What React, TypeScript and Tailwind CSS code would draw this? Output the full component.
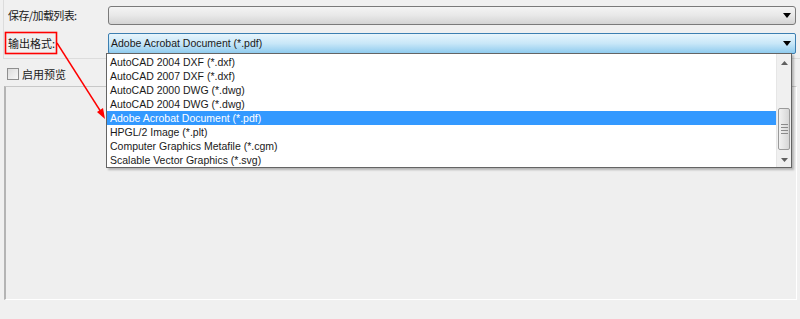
import type { FC } from "react";

const formats = [
  "AutoCAD 2004 DXF (*.dxf)",
  "AutoCAD 2007 DXF (*.dxf)",
  "AutoCAD 2000 DWG (*.dwg)",
  "AutoCAD 2004 DWG (*.dwg)",
  "Adobe Acrobat Document (*.pdf)",
  "HPGL/2 Image (*.plt)",
  "Computer Graphics Metafile (*.cgm)",
  "Scalable Vector Graphics (*.svg)",
];

const selected = 4;

const Caret: FC = () => (
  <svg width="8" height="5" viewBox="0 0 8 5" className="shrink-0">
    <path d="M0 0h8L4 5z" fill="#000" />
  </svg>
);

const ScrollArrow: FC<{ up?: boolean }> = ({ up }) => (
  <svg width="7" height="4" viewBox="0 0 7 4">
    <path d={up ? "M0 4h7L3.5 0z" : "M0 0h7L3.5 4z"} fill="#606060" />
  </svg>
);

const FormatList: FC = () => (
  <div className="absolute left-[106px] top-[53px] w-[686px] h-[115px] bg-white border border-[#646464] shadow-[2px_2px_2px_rgba(0,0,0,0.25)] flex text-[10.5px]">
    <div className="flex-1 pt-[1px]">
      {formats.map((f, i) => (
        <div
          key={f}
          className={
            i === selected
              ? "h-[14px] leading-[14px] pl-[3px] bg-[#3399ff] text-white"
              : "h-[14px] leading-[14px] pl-[3px] text-[#1a1a1a]"
          }
        >
          {f}
        </div>
      ))}
    </div>
    <div className="w-[15px] bg-[#f0f0f0] border-l border-[#e6e6e6] flex flex-col">
      <div className="h-[17px] flex items-center justify-center">
        <ScrollArrow up />
      </div>
      <div className="mt-[37px] h-[42px] mx-[1px] rounded-[2px] border border-[#9a9a9a] bg-gradient-to-r from-[#f2f2f2] to-[#d6d6d6] flex flex-col items-center justify-center gap-[2px]">
        <div className="w-[7px] h-px bg-[#8a8a8a]" />
        <div className="w-[7px] h-px bg-[#8a8a8a]" />
        <div className="w-[7px] h-px bg-[#8a8a8a]" />
        <div className="w-[7px] h-px bg-[#8a8a8a]" />
      </div>
      <div className="flex-1 flex items-end justify-center pb-[5px]">
        <ScrollArrow />
      </div>
    </div>
  </div>
);

export default function App() {
  return (
    <div className="relative w-[800px] h-[319px] overflow-hidden bg-[#f0f0f0] text-[11px] text-[#1a1a1a] font-['Liberation_Sans','Noto_Sans_CJK_SC',sans-serif]">
      <div className="ml-[3px] h-[59px] border-l border-b border-[#dcdcdc] pl-[4px] pr-[4px] pt-[6px]">
        <div className="flex items-center h-[19px]">
          <span className="w-[100px] shrink-0 font-['Noto_Sans_CJK_SC',sans-serif] tracking-[-0.6px]">保存/加载列表:</span>
          <div className="flex-1 h-[19px] rounded-[3px] border border-[#7a7a7a] bg-gradient-to-b from-[#f4f4f4] via-[#e8e8e8] to-[#d4d4d4] flex items-center justify-end pr-[4px]">
            <Caret />
          </div>
        </div>
        <div className="flex items-center h-[21px] mt-[8px]">
          <span className="w-[100px] shrink-0 font-['Noto_Sans_CJK_SC',sans-serif]">输出格式:</span>
          <div className="flex-1 h-[21px] rounded-[2px] border border-[#3c7fb1] bg-gradient-to-b from-[#e8f5fc] via-[#c8e7f8] to-[#8fcbee] flex items-center justify-between pl-[2px] pr-[4px]">
            <span className="text-[10.5px]">Adobe Acrobat Document (*.pdf)</span>
            <Caret />
          </div>
        </div>
      </div>

      <label className="flex items-center gap-[3px] ml-[7px] mt-[9px] h-[12px]">
        <span className="w-[12px] h-[12px] border border-[#8f8f8f] bg-gradient-to-br from-[#dcdcdc] to-[#f8f8f8]" />
        <span className="font-['Noto_Sans_CJK_SC',sans-serif]">启用预览</span>
      </label>

      <div className="ml-[4px] mr-[3px] mt-[6px] h-[214px] border-l-2 border-t border-r border-b border-l-[#b4b4b4] border-t-[#c8c8c8] border-r-white border-b-white bg-[#efefef]" />

      <FormatList />

      <svg className="absolute left-0 top-0 pointer-events-none" width="800" height="319">
        <rect x="5.5" y="32.5" width="51" height="21" fill="none" stroke="#ff0000" strokeWidth="1.6" />
        <line x1="57" y1="43" x2="101" y2="112" stroke="#ff0000" strokeWidth="1.4" />
        <path d="M105 119 L97 112 L103 108 Z" fill="#ff0000" />
      </svg>
    </div>
  );
}
